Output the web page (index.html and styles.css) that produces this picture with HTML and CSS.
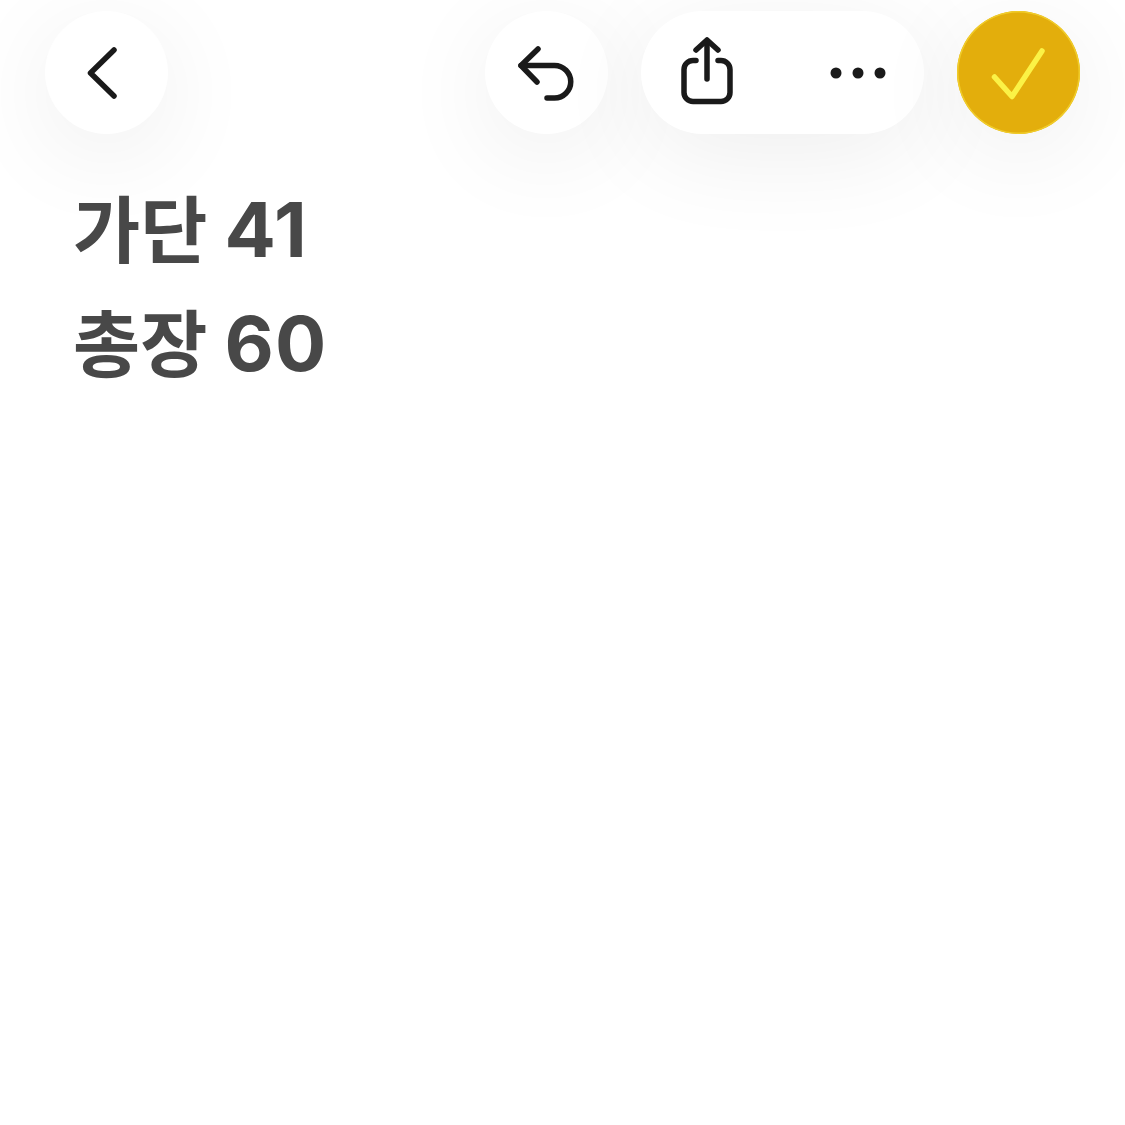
FILE: index.html
```html
<!DOCTYPE html>
<html lang="ko">
<head>
    <meta charset="UTF-8">
    <meta name="viewport" content="width=device-width, initial-scale=1.0">
    <title>메모</title>
    <link rel="stylesheet" href="styles.css">
</head>
<body>

<header class="toolbar">
    <button class="round-btn back-btn" aria-label="뒤로">
        <svg class="icon" viewBox="0 0 123 123">
            <path d="M69 39 L45.500 62 L69 85"/>
        </svg>
    </button>

    <button class="round-btn" aria-label="실행 취소">
        <svg class="icon" viewBox="0 0 123 123">
            <path d="M53 38 L36 54.500 L52 71"/>
            <path d="M36 54.500 H69.500 A16.250 16.250 0 0 1 69.500 87 H62"/>
        </svg>
    </button>

    <div class="pill">
        <button class="pill-btn" aria-label="공유">
            <svg class="icon" viewBox="0 0 132 123">
                <path d="M55 49.500 H52 A9 9 0 0 0 43 58.500 V81.500 A9 9 0 0 0 52 90.500 H80 A9 9 0 0 0 89 81.500 V58.500 A9 9 0 0 0 80 49.500 H77"/>
                <path d="M66 68 V30"/>
                <path d="M55 39 L66 29 L77 39"/>
            </svg>
        </button>
        <button class="pill-btn" aria-label="더보기">
            <svg class="dots" viewBox="0 0 132 123">
                <circle cx="44" cy="62" r="5.500"/>
                <circle cx="66" cy="62" r="5.500"/>
                <circle cx="88" cy="62" r="5.500"/>
            </svg>
        </button>
    </div>

    <button class="round-btn done-btn" aria-label="완료">
        <svg class="icon" viewBox="0 0 123 123">
            <path d="M37.500 66 L55 85.500 L85 40"/>
        </svg>
    </button>
</header>

<main class="note">
    <p>가단 <span class="num">41</span></p>
    <p>총장 <span class="num">60</span></p>
</main>

</body>
</html>
```

FILE: styles.css
```css
body {
    margin: 0;
    background-color: #fff;
    font-family: "Inter", "Noto Sans CJK KR", sans-serif;
}
button {
    margin: 0;
    padding: 0;
    border: none;
    background: none;
}
.toolbar {
    display: flex;
    align-items: center;
    gap: 33px;
    padding: 11px 45px 0;
}
.round-btn {
    flex: none;
    width: 123px;
    height: 123px;
    border-radius: 50%;
    background-color: #fff;
    box-shadow: 0 20px 100px rgba(0, 0, 0, 0.07);
}
.back-btn {
    margin-right: auto;
}
.pill {
    display: flex;
    justify-content: space-between;
    width: 283px;
    height: 123px;
    border-radius: 62px;
    background-color: #fff;
    box-shadow: 0 20px 100px rgba(0, 0, 0, 0.07);
}
.pill-btn {
    width: 132px;
    height: 123px;
}
.icon, .dots {
    display: block;
    width: 100%;
    height: 100%;
}
.icon path {
    fill: none;
    stroke: #1a1a1a;
    stroke-width: 5.500;
    stroke-linecap: round;
    stroke-linejoin: round;
}
.dots circle {
    fill: #1a1a1a;
}
.done-btn {
    background-color: #e3ae0c;
    box-shadow: 0 0 0 1.500px #f0cc2a inset, 0 20px 100px rgba(0, 0, 0, 0.07);
}
.done-btn .icon path {
    stroke: #fbf246;
}
.note {
    padding: 39px 0 0 73px;
    color: #484848;
    font-size: 73px;
    font-weight: 700;
    line-height: 112px;
}
.note p {
    margin: 0;
}
.num {
    font-size: 76px;
    letter-spacing: 1px;
}
```
